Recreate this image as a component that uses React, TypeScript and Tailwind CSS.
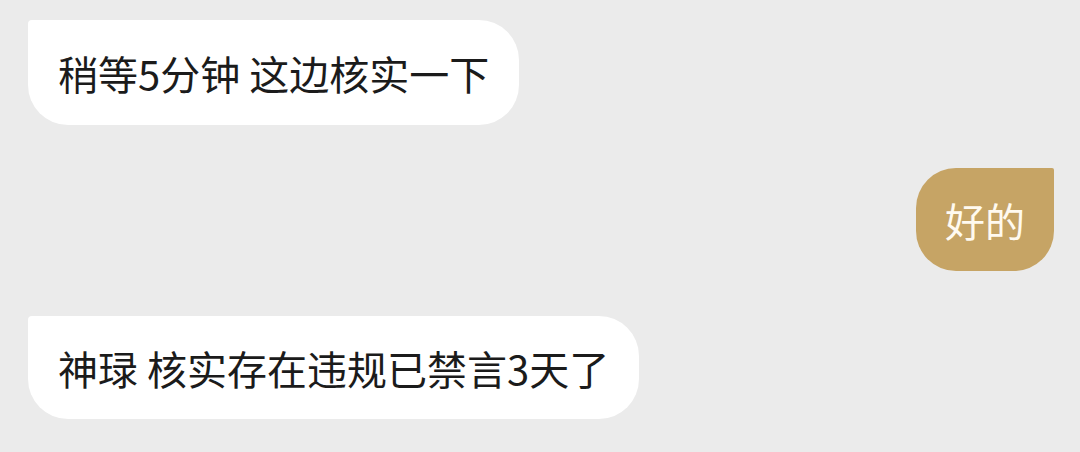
export default function App() {
  return (
    <div
      className="w-[1080px] h-[452px] bg-[#ebebeb] overflow-hidden flex flex-col pt-[20px] pl-[28px] pr-[26px]"
      style={{ fontFamily: '"Noto Sans CJK SC", "Noto Sans", sans-serif' }}
    >
      <div className="self-start h-[105px] flex items-center bg-white text-[#1b1b1b] text-[40px] leading-none px-[30px] rounded-[40px] rounded-tl-[4px]">
        稍等5分钟 这边核实一下
      </div>
      <div className="self-end mt-[43px] h-[103px] flex items-center bg-[#c6a465] text-[#fffaf0] text-[40px] leading-none px-[29px] rounded-[40px] rounded-tr-[2px]">
        好的
      </div>
      <div className="self-start mt-[45px] h-[103px] flex items-center bg-white text-[#1b1b1b] text-[40px] leading-none px-[30px] rounded-[40px] rounded-tl-[4px]">
        神琭 核实存在违规已禁言3天了
      </div>
    </div>
  );
}
